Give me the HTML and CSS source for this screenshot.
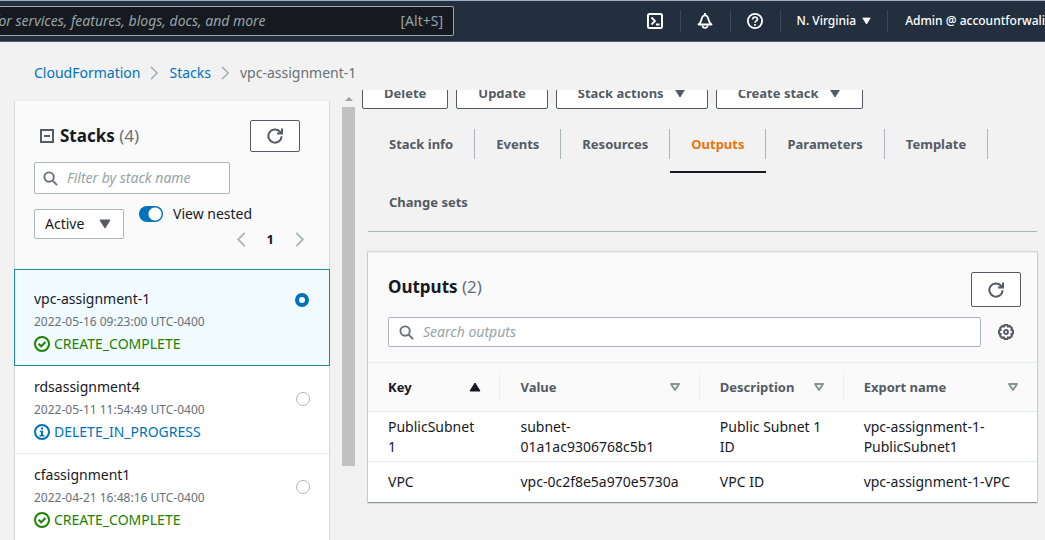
FILE: index.html
```html
<!DOCTYPE html>
<html lang="en">
<head>
<meta charset="utf-8">
<title>CloudFormation - Stack outputs</title>
<link rel="stylesheet" href="styles.css">
</head>
<body>
<svg class="defs" aria-hidden="true">
  <symbol id="refresh" viewBox="0 0 16 16"><path d="M14.6 8.2A6.6 6.6 0 1 1 12.8 3.500L14.6 5.200M15 .5v5h-5" fill="none" stroke="currentColor" stroke-width="2"/></symbol>
  <symbol id="search" viewBox="0 0 16 16"><circle cx="6.500" cy="6.500" r="5" fill="none" stroke="currentColor" stroke-width="2"/><path d="M10.200 10.200l4.800 4.800" stroke="currentColor" stroke-width="2"/></symbol>
  <symbol id="down" viewBox="0 0 12 10"><path d="M1 1h10L6 9z" fill="currentColor" stroke="currentColor" stroke-linejoin="round"/></symbol>
  <symbol id="up" viewBox="0 0 12 10"><path d="M1 9h10L6 1z" fill="currentColor" stroke="currentColor" stroke-linejoin="round"/></symbol>
  <symbol id="sort" viewBox="0 0 12 10"><path d="M2 2h8L6 8z" fill="none" stroke="currentColor" stroke-width="2" stroke-linejoin="round"/></symbol>
  <symbol id="next" viewBox="0 0 10 16"><path d="M1 1l7 7-7 7" fill="none" stroke="currentColor" stroke-width="2"/></symbol>
  <symbol id="prev" viewBox="0 0 10 16"><path d="M9 1L2 8l7 7" fill="none" stroke="currentColor" stroke-width="2"/></symbol>
  <symbol id="ok" viewBox="0 0 16 16"><circle cx="8" cy="8" r="7" fill="none" stroke="currentColor" stroke-width="2"/><path d="M4.500 7.800L7.200 10.300l4.300-4.300" fill="none" stroke="currentColor" stroke-width="2"/></symbol>
  <symbol id="info" viewBox="0 0 16 16"><circle cx="8" cy="8" r="7" fill="none" stroke="currentColor" stroke-width="2"/><path d="M7 3.500h2v2H7zM5.800 6.700H9V11h1.500v1.500h-5V11H7V8.200H5.800z" fill="currentColor"/></symbol>
</svg>

<header class="topbar">
  <div class="topsearch">
    <input type="text" aria-label="Search services" placeholder="for services, features, blogs, docs, and more">
    <span class="shortcut">[Alt+S]</span>
  </div>
  <nav class="topnav" aria-label="Account">
    <button class="topicon" aria-label="CloudShell"><svg viewBox="0 0 16 16"><rect x="1" y="1" width="14" height="14" rx="1.500" fill="none" stroke="currentColor" stroke-width="2"/><path d="M4.500 4.500L8 8l-3.500 3.500M9 11.500h3.500" fill="none" stroke="currentColor" stroke-width="1.800"/></svg></button>
    <button class="topicon" aria-label="Notifications"><svg viewBox="0 0 16 16"><path d="M1.500 11.500h13c-2-1.500-2.500-2.500-3-5C11 4 10 2.300 8 2.300S5 4 4.500 6.500c-.5 2.500-1 3.500-3 5z" fill="none" stroke="currentColor" stroke-width="1.800" stroke-linejoin="round"/><path d="M8 0v2M5.500 12.500c.3 3.200 4.700 3.200 5 0" fill="none" stroke="currentColor" stroke-width="1.800"/></svg></button>
    <button class="topicon" aria-label="Help"><svg viewBox="0 0 16 16"><circle cx="8" cy="8" r="7.100" fill="none" stroke="currentColor" stroke-width="1.800"/><path d="M5.600 6.400c0-3.200 4.900-3 4.900-.2C10.500 7.800 8 7.900 8 9.700M8 11v1.800" fill="none" stroke="currentColor" stroke-width="1.700"/></svg></button>
    <button class="toptext region">N. Virginia <svg class="caret"><use href="#down"/></svg></button>
    <button class="toptext account">Admin @ accountforwali</button>
  </nav>
</header>

<nav class="crumbs" aria-label="Breadcrumb">
  <a href="#">CloudFormation</a><svg><use href="#next"/></svg>
  <a href="#">Stacks</a><svg><use href="#next"/></svg>
  <span>vpc-assignment-1</span>
</nav>

<div class="workspace">
  <aside class="stacks">
    <div class="stackhead">
      <div class="titlerow">
        <button class="collapse" aria-label="Collapse stacks"><svg viewBox="0 0 14 14"><path d="M1 1h12v12H1zM4 7h6" fill="none" stroke="currentColor" stroke-width="2"/></svg></button>
        <h2>Stacks <span>(4)</span></h2>
        <button class="refresh" aria-label="Refresh stacks"><svg><use href="#refresh"/></svg></button>
      </div>
      <div class="searchbox filter"><svg><use href="#search"/></svg><input type="text" aria-label="Filter by stack name" placeholder="Filter by stack name"></div>
      <div class="controls">
        <div class="selectbox"><select aria-label="Stack status"><option>Active</option></select><svg class="caret"><use href="#down"/></svg></div>
        <div class="viewopts">
          <label class="toggle"><input type="checkbox" checked>View nested</label>
          <div class="pager">
            <button aria-label="Previous page"><svg><use href="#prev"/></svg></button>
            <b>1</b>
            <button aria-label="Next page"><svg><use href="#next"/></svg></button>
          </div>
        </div>
      </div>
    </div>
    <label class="stack selected">
      <span class="name">vpc-assignment-1</span>
      <input type="radio" name="stack" checked>
      <span class="time">2022-05-16 09:23:00 UTC-0400</span>
      <span class="status ok"><svg><use href="#ok"/></svg>CREATE_COMPLETE</span>
    </label>
    <label class="stack">
      <span class="name">rdsassignment4</span>
      <input type="radio" name="stack">
      <span class="time">2022-05-11 11:54:49 UTC-0400</span>
      <span class="status busy"><svg><use href="#info"/></svg>DELETE_IN_PROGRESS</span>
    </label>
    <label class="stack">
      <span class="name">cfassignment1</span>
      <input type="radio" name="stack">
      <span class="time">2022-04-21 16:48:16 UTC-0400</span>
      <span class="status ok"><svg><use href="#ok"/></svg>CREATE_COMPLETE</span>
    </label>
  </aside>
  <div class="scrollbar" aria-hidden="true"><svg viewBox="0 0 8 4"><path d="M0 4h8L4 0z" fill="currentColor"/></svg><div class="thumb"></div></div>

  <main class="detail">
    <div class="actions">
      <button>Delete</button>
      <button>Update</button>
      <button>Stack actions<svg class="caret"><use href="#down"/></svg></button>
      <button>Create stack<svg class="caret"><use href="#down"/></svg></button>
    </div>
    <div class="body">
      <nav class="tabs" aria-label="Stack details">
        <a href="#"><span>Stack info</span></a>
        <a href="#"><span>Events</span></a>
        <a href="#"><span>Resources</span></a>
        <a href="#" class="current" aria-current="page"><span>Outputs</span></a>
        <a href="#"><span>Parameters</span></a>
        <a href="#"><span>Template</span></a>
        <a href="#"><span>Change sets</span></a>
      </nav>
      <section class="outputs">
        <div class="outhead">
          <h2>Outputs <span>(2)</span></h2>
          <button class="refresh" aria-label="Refresh outputs"><svg><use href="#refresh"/></svg></button>
        </div>
        <div class="outsearch">
          <div class="searchbox"><svg><use href="#search"/></svg><input type="text" aria-label="Search outputs" placeholder="Search outputs"></div>
          <button class="gear" aria-label="Preferences"><svg viewBox="0 0 16 16"><path d="M6.500 1h3l.5 1.700 1.700-.7 2.300 2.300-.7 1.700 1.700.5v3l-1.700.5.7 1.700-2.300 2.300-1.700-.7-.5 1.700h-3L6 13.300l-1.700.7L2 11.700l.7-1.700L1 9.500v-3L2.700 6 2 4.300 4.300 2l1.700.7z" fill="none" stroke="currentColor" stroke-width="2" stroke-linejoin="round"/><circle cx="8" cy="8" r="2" fill="none" stroke="currentColor" stroke-width="1.800"/></svg></button>
        </div>
        <table>
          <colgroup><col class="c-key"><col class="c-value"><col class="c-desc"><col class="c-export"></colgroup>
          <thead><tr>
            <th class="sorted"><button>Key<svg><use href="#up"/></svg></button></th>
            <th><button>Value<svg><use href="#sort"/></svg></button></th>
            <th><button>Description<svg><use href="#sort"/></svg></button></th>
            <th><button>Export name<svg><use href="#sort"/></svg></button></th>
          </tr></thead>
          <tbody>
            <tr><td>PublicSubnet<wbr>1</td><td>subnet-<wbr>01a1ac9306768c5b1</td><td>Public Subnet 1 ID</td><td>vpc-assignment-1-<wbr>PublicSubnet1</td></tr>
            <tr><td>VPC</td><td>vpc-0c2f8e5a970e5730a</td><td>VPC ID</td><td>vpc-assignment-1-VPC</td></tr>
          </tbody>
        </table>
      </section>
    </div>
  </main>
</div>
</body>
</html>
```
FILE: styles.css
```css
* { box-sizing: border-box; }
html, body { height: 100%; }
body {
  margin: 0;
  display: flex;
  flex-direction: column;
  overflow: hidden;
  background: #f2f2f2;
  color: #16191f;
  font: 14px/20px "Noto Sans", "Open Sans", sans-serif;
}
button, input, select { font: inherit; color: inherit; }
button { padding: 0; border: 0; background: none; cursor: pointer; }
a { color: #0073bb; text-decoration: none; }
h2 { margin: 0; font-size: 17px; line-height: 30px; font-weight: 700; }
h2 span { color: #687078; font-weight: 400; }
svg { display: block; width: 16px; height: 16px; flex: none; }
.defs { display: none; }
.caret { width: 12px; height: 10px; }
input::placeholder { color: #95a5a6; opacity: 1; font-style: italic; }

/* Top bar */
.topbar {
  flex: none;
  height: 42px;
  display: flex;
  justify-content: space-between;
  align-items: center;
  overflow: hidden;
  border-top: 1px solid #9bafc6;
  border-bottom: 1px solid #55606d;
  background: #232f3e;
  color: #fff;
}
.topsearch {
  width: 460px;
  height: 30px;
  margin-left: -6px;
  display: flex;
  align-items: center;
  padding-right: 10px;
  border: 1px solid #9ba7b3;
  border-left: 0;
  border-radius: 2px;
  background: #16191f;
  color: #95a5a6;
}
.topsearch input { flex: 1; min-width: 0; padding: 0; border: 0; background: none; outline: 0; }
.topnav { display: flex; align-items: center; }
.topicon, .toptext { height: 22px; display: flex; align-items: center; }
.topicon { width: 50px; justify-content: center; border-right: 1px solid #3d4856; }
.toptext { gap: 6px; font-size: 12px; font-weight: 500; white-space: nowrap; }
.toptext .caret { width: 9px; height: 8px; }
.region { padding: 0 16px; border-right: 1px solid #3d4856; }
.account { padding: 0 0 0 17px; }

/* Breadcrumb */
.crumbs {
  flex: none;
  height: 48px;
  display: flex;
  align-items: center;
  gap: 10px;
  padding: 14px 34px 0;
}
.crumbs svg { width: 9px; height: 14px; color: #aab7b8; }
.crumbs span { color: #687078; }

/* Columns */
.workspace { flex: 1; min-height: 0; display: flex; padding-left: 14px; overflow: hidden; }
.stacks {
  flex: none;
  width: 316px;
  margin-top: 10px;
  border: solid #d5dbdb;
  border-width: 1px 1px 0;
  border-top-color: #eaeded;
  background: #fff;
}
.scrollbar {
  flex: none;
  width: 13px;
  margin: 7px 7px 0 12px;
  background: #f1f1f1;
  color: #a0a0a0;
}
.scrollbar svg { width: 8px; height: 4px; margin: 0 auto 6px; }
.thumb { height: 81%; background: #c1c1c1; }

/* Stack list */
.stackhead { padding: 19px 29px 22px 19px; background: #fafafa; }
.titlerow { display: flex; align-items: center; gap: 6px; padding-left: 6px; }
.collapse { color: #545b64; }
.collapse svg { width: 14px; height: 14px; }
.titlerow h2 { flex: 1; }
.refresh {
  width: 50px;
  height: 32px;
  display: flex;
  align-items: center;
  justify-content: center;
  border: 1px solid #545b64;
  border-radius: 2px;
  background: #fff;
  color: #545b64;
}
.searchbox {
  height: 30px;
  display: flex;
  align-items: center;
  gap: 9px;
  padding: 0 8px 0 10px;
  border: 1px solid #aab7b8;
  border-radius: 2px;
  background: #fff;
  color: #687078;
}
.searchbox svg { width: 15px; height: 15px; }
.searchbox input { flex: 1; min-width: 0; padding: 0; border: 0; outline: 0; background: none; }
.filter { width: 196px; height: 32px; margin: 10px 0 12px; padding-left: 8px; }
.controls { display: flex; gap: 15px; align-items: flex-start; }
.selectbox {
  display: grid;
  grid-template-columns: 1fr 12px;
  align-items: center;
  width: 90px;
  height: 30px;
  margin-top: 3px;
  padding-right: 12px;
  border: 1px solid #aab7b8;
  border-radius: 2px;
  background: #fff;
}
.selectbox select {
  grid-area: 1 / 1 / 2 / 3;
  height: 28px;
  padding: 0 0 0 10px;
  border: 0;
  appearance: none;
  background: none;
}
.selectbox .caret { grid-area: 1 / 2; color: #545b64; pointer-events: none; }
.viewopts { flex: 1; }
.toggle { display: flex; align-items: center; gap: 10px; height: 16px; }
.toggle input {
  appearance: none;
  width: 24px;
  height: 16px;
  margin: 0;
  border-radius: 8px;
  background: radial-gradient(circle at 16px 8px, #fff 6px, #0073bb 7px);
}
.pager {
  display: flex;
  align-items: center;
  justify-content: flex-end;
  gap: 21px;
  height: 18px;
  margin: 8px -5px 0 0;
}
.pager svg { width: 10px; height: 15px; color: #aab7b8; }
.pager b { font-size: 13px; }

.stack {
  display: grid;
  grid-template-columns: 1fr 14px;
  padding: 10px 19px 11px 19px;
  border-bottom: 1px solid #eaeded;
}
.selected {
  margin: -1px -1px 0;
  padding: 18px 20px 11px 19px;
  border: 1px solid #1a8c9c;
  background: #f1faff;
}
.name { grid-column: 1; line-height: 22px; }
.stack input {
  grid-area: 1 / 2 / 3 / 3;
  align-self: center;
  appearance: none;
  width: 14px;
  height: 14px;
  margin: 0;
  border: 1px solid #aab7b8;
  border-radius: 50%;
  background: #fff;
}
.stack input:checked { align-self: start; margin-top: 5px; border: 4px solid #0073bb; }
.time { grid-column: 1; color: #687078; font-size: 12px; line-height: 23px; }
.status { grid-column: 1; display: flex; align-items: center; gap: 4px; line-height: 21px; }
.ok { color: #1d8102; }
.busy { color: #0073bb; }

/* Stack detail */
.detail { flex: 1; min-width: 0; padding-right: 8px; }
.actions { height: 19px; display: flex; align-items: flex-end; gap: 8px; overflow: hidden; }
.actions button {
  flex: none;
  height: 32px;
  display: flex;
  align-items: center;
  gap: 10px;
  padding: 0 21px;
  border: 1px solid #545b64;
  border-radius: 2px;
  background: #fff;
  color: #545b64;
  font-size: 13px;
  font-weight: 700;
}
.body { padding: 6px 0 0 6px; }
.tabs { display: flex; flex-wrap: wrap; border-bottom: 1px solid #aab7b8; }
.tabs a {
  height: 58px;
  padding-top: 14px;
  border-bottom: 2px solid transparent;
  color: #545b64;
  font-size: 13px;
  font-weight: 700;
}
.tabs span { display: block; padding: 0 21px; border-right: 1px solid #aab7b8; line-height: 30px; }
.tabs a:last-child span { border-right: 0; }
.tabs .current { border-color: #16191f; color: #ec7211; }

.outputs {
  margin-top: 20px;
  border-top: 1px solid #eaeded;
  background: #fafafa;
  box-shadow: 0 1px 1px #879196, 0 0 1px 1px #d5dbdb;
}
.outhead { display: flex; justify-content: space-between; align-items: flex-start; padding: 19px 16px 10px 20px; }
.outhead .refresh { height: 35px; }
.outsearch { display: flex; align-items: center; gap: 17px; padding: 0 23px 15px 20px; }
.outsearch .searchbox { flex: 1; }
.gear { color: #545b64; }

table { width: 100%; table-layout: fixed; border-collapse: collapse; border-top: 1px solid #eaeded; }
.c-key { width: 19.8%; }
.c-value { width: 29.8%; }
.c-desc { width: 21.5%; }
th { padding: 11px 0; }
th button {
  width: 100%;
  height: 26px;
  display: flex;
  align-items: center;
  justify-content: space-between;
  padding: 0 18px 0 20px;
  border-right: 1px solid #eaeded;
  color: #545b64;
  font-size: 13px;
  font-weight: 700;
}
th:last-child button { border-right: 0; }
th svg { width: 12px; height: 10px; color: #879596; }
.sorted button, .sorted svg { color: #16191f; }
td { height: 40px; padding: 5px 19px 4px 20px; border-top: 1px solid #eaeded; background: #fff; }
```
